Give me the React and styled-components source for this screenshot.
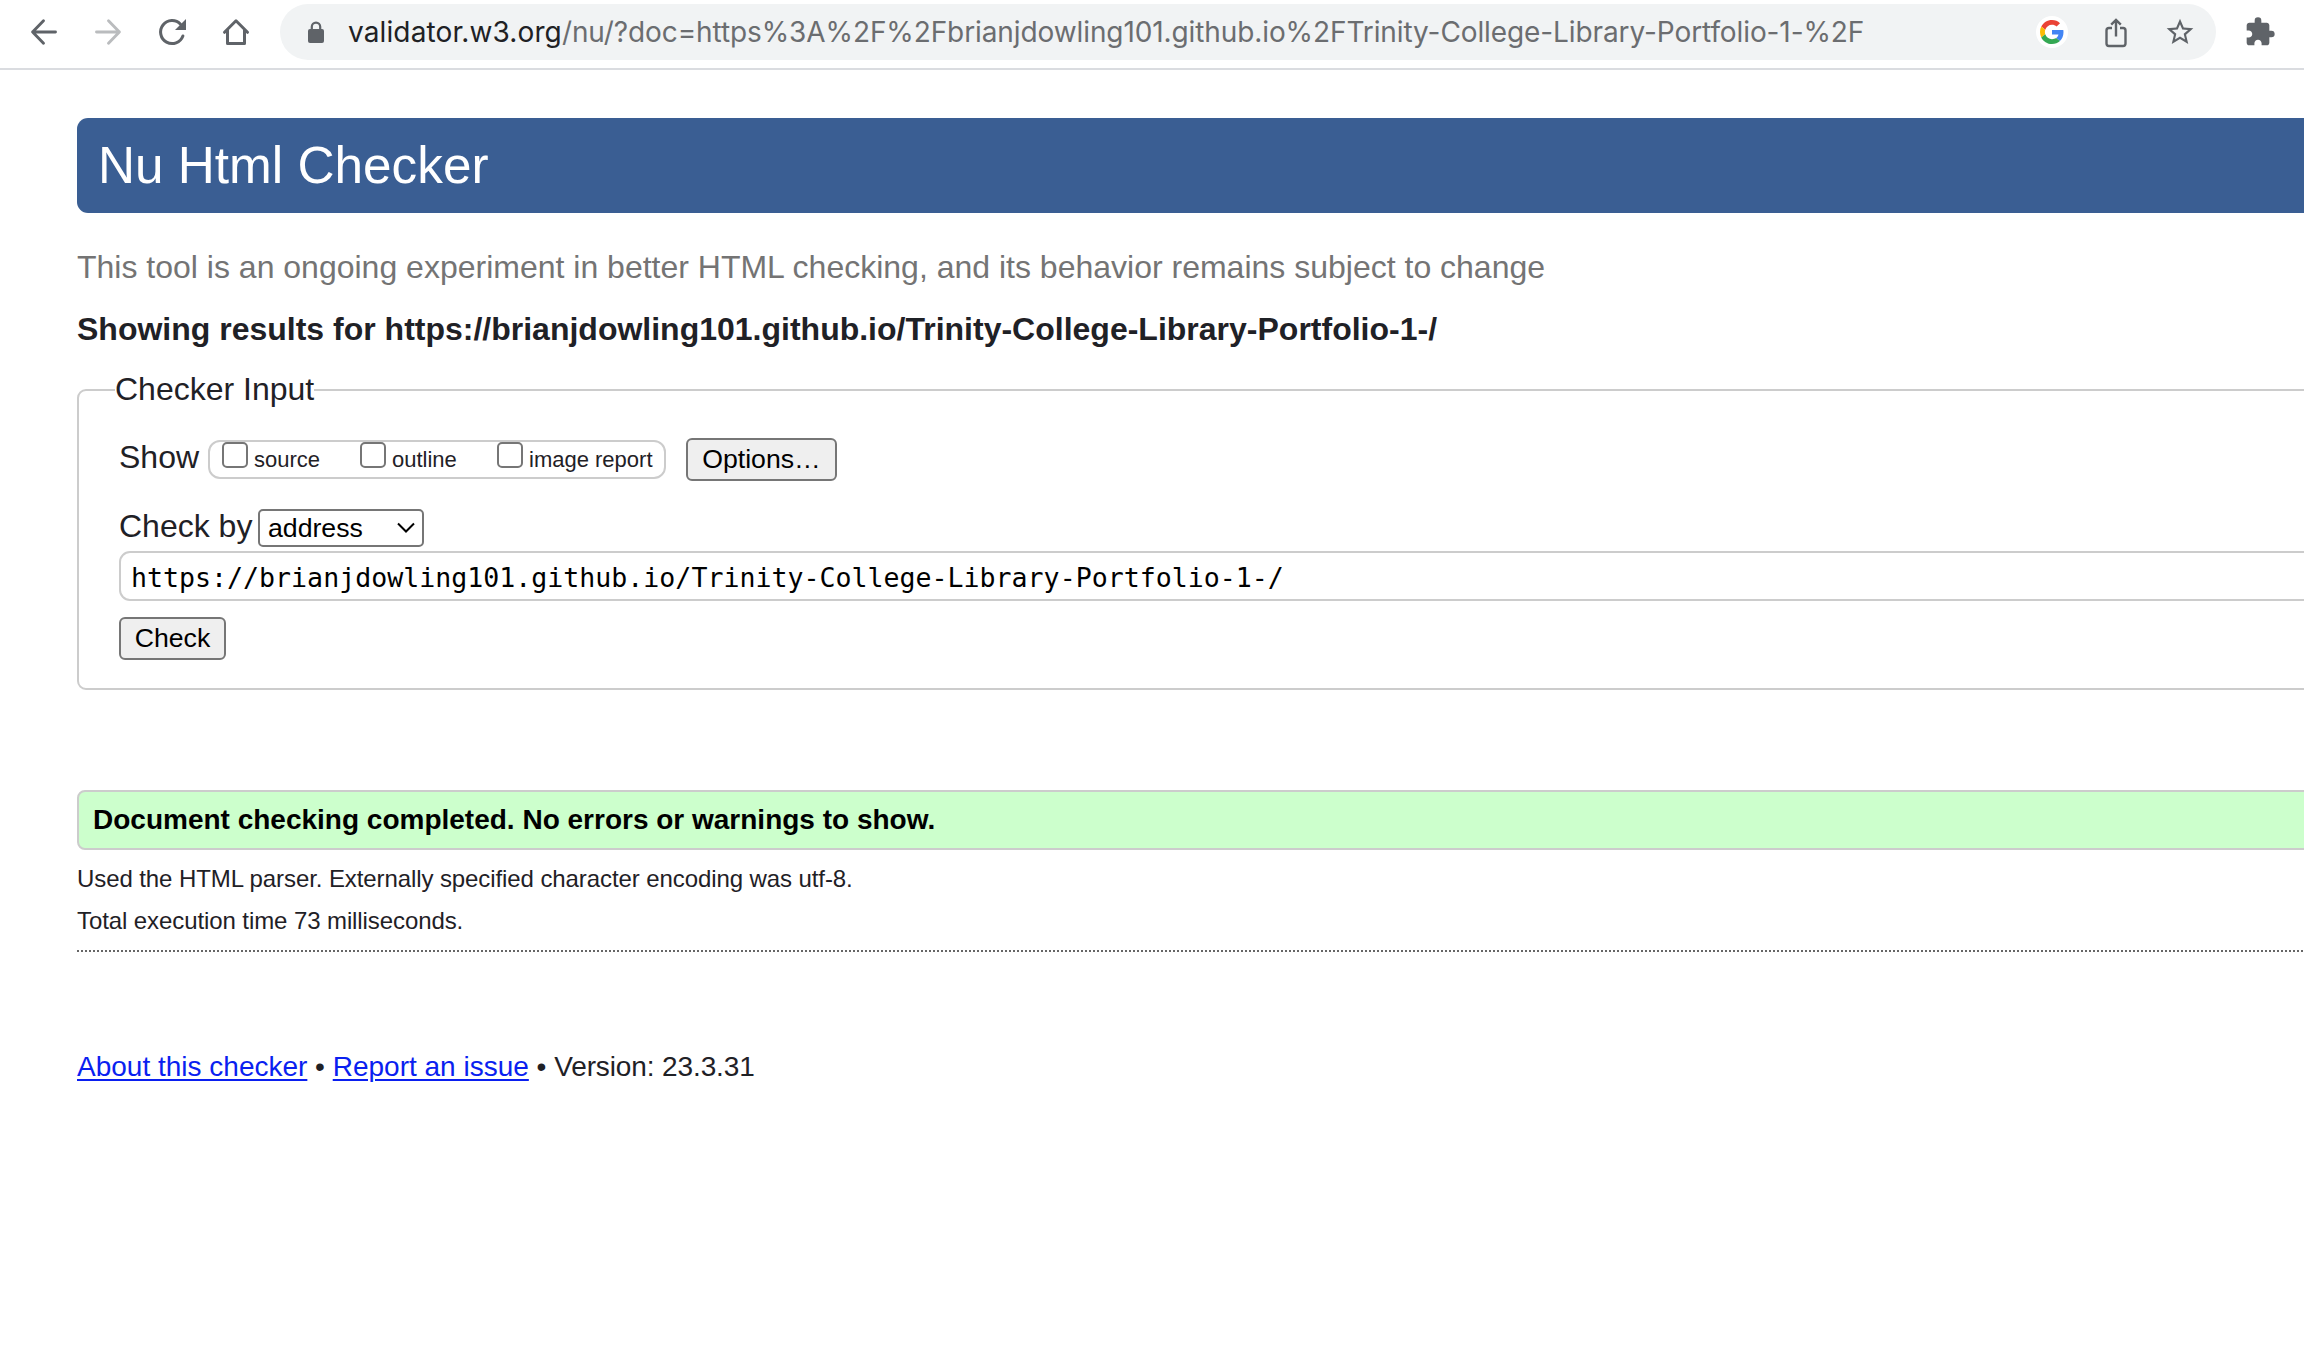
import React from "react";
import styled, { createGlobalStyle } from "styled-components";

const sans = `"Liberation Sans", Arial, sans-serif`;
const ui = `Inter, Roboto, sans-serif`;
const mono = `"DejaVu Sans Mono", monospace`;

const GlobalStyle = createGlobalStyle`
  *, *::before, *::after { box-sizing: border-box; }
  body { margin: 0; background: #fff; color: #1f2126; font-family: ${sans}; overflow: hidden; }
`;

const Screen = styled.div`
  width: 100vw;
  height: 100vh;
  overflow: hidden;
  background: #fff;
`;

const Toolbar = styled.header`
  display: flex;
  align-items: flex-start;
  height: 70px;
  padding: 4px 0 0 24px;
  border-bottom: 2px solid #dadce0;
`;

const NavButton = styled.span`
  display: flex;
  align-items: center;
  justify-content: center;
  flex: none;
  width: 40px;
  height: 56px;
  margin-right: 24px;
  color: ${(p) => (p.$muted ? "#babcbe" : "#5f6368")};
`;

const Omnibox = styled.div`
  display: flex;
  align-items: center;
  flex: none;
  width: 1936px;
  height: 56px;
  padding: 0 20px 0 24px;
  border-radius: 28px;
  background: #f1f3f4;
`;

const LockSlot = styled.span`
  display: flex;
  width: 24px;
  margin-right: 20px;
`;

const Url = styled.span`
  flex: 1;
  white-space: nowrap;
  font: 400 28px/56px ${ui};
  letter-spacing: -0.1px;
  color: #6b6d70;
`;

const Host = styled.span`
  letter-spacing: 0.12px;
  color: #202124;
`;

const OmniAction = styled.span`
  display: flex;
  align-items: center;
  justify-content: center;
  flex: none;
  width: 32px;
  height: 32px;
  margin-left: 32px;
  border-radius: 50%;
  background: ${(p) => (p.$disc ? "#fff" : "transparent")};
  color: #5f6368;
`;

const Extensions = styled.span`
  display: flex;
  align-items: center;
  height: 56px;
  margin-left: 28px;
  color: #5f6368;
`;

const Page = styled.main`
  padding: 48px 0 0 77px;
`;

const TitleBar = styled.h1`
  margin: 0;
  height: 95px;
  padding-left: 21px;
  border-radius: 11px 0 0 11px;
  background: #3a5e93;
  color: #fff;
  font-weight: 400;
  font-size: 51.3px;
  line-height: 95px;
`;

const Tagline = styled.p`
  margin: 34px 0 0;
  color: #747474;
  font-size: 32px;
  line-height: 40px;
`;

const ResultsHeading = styled.h2`
  margin: 22px 0 0;
  font-size: 32px;
  line-height: 40px;
`;

const Fieldset = styled.fieldset`
  margin: 23px -20px 0 0;
  padding: 30px 0 28px 40px;
  border: 2px solid #ccc;
  border-radius: 9px;
  min-width: 0;
`;

const Legend = styled.legend`
  margin-left: -4px;
  padding: 0 0 2px;
  font-size: 32px;
  line-height: 34px;
`;

const Row = styled.div`
  display: flex;
  align-items: flex-start;
  margin-top: ${(p) => p.$gap || 0}px;
`;

const RowLabel = styled.span`
  flex: none;
  width: ${(p) => p.$width}px;
  font-size: 32px;
  line-height: ${(p) => p.$line}px;
  white-space: nowrap;
`;

const CheckGroup = styled.div`
  display: flex;
  align-items: flex-start;
  width: 458px;
  height: 39px;
  margin: 2px 20px 0 0;
  padding-left: 12px;
  border: 2px solid #ccc;
  border-radius: 12px;
`;

const CheckItem = styled.label`
  display: flex;
  flex: none;
  width: ${(p) => p.$width}px;
  font-size: 22px;
  line-height: 36px;
  white-space: nowrap;
`;

const Box = styled.span`
  flex: none;
  width: 26px;
  height: 26px;
  margin-right: 6px;
  border: 2px solid #767676;
  border-radius: 5px;
  background: #fff;
`;

const Button = styled.button`
  width: ${(p) => p.$width}px;
  height: 43px;
  padding: 0;
  border: 2px solid #767676;
  border-radius: 6px;
  background: #efefef;
  color: #000;
  font: 26.67px/39px ${sans};
`;

const Select = styled.div`
  display: flex;
  align-items: center;
  justify-content: space-between;
  width: 166px;
  height: 38px;
  padding: 0 6px 0 8px;
  border: 2px solid #767676;
  border-radius: 5px;
  background: #fff;
  color: #000;
  font-size: 26.67px;
  line-height: 34px;
`;

const AddressField = styled.div`
  height: 50px;
  margin-top: 4px;
  padding: 3px 0 0 10px;
  border: 2px solid #ccc;
  border-radius: 11px;
  color: #000;
  font: 26.6px/43px ${mono};
  white-space: nowrap;
`;

const Success = styled.p`
  margin: 100px -20px 0 0;
  height: 60px;
  padding-left: 14px;
  border: 2px solid #ccc;
  border-radius: 8px;
  background: #cfc;
  color: #000;
  font-weight: 700;
  font-size: 28px;
  line-height: 56px;
`;

const Detail = styled.p`
  margin: ${(p) => p.$gap}px 0 0;
  font-size: 24px;
  line-height: 30px;
  letter-spacing: -0.09px;
`;

const Rule = styled.div`
  height: 2px;
  margin-top: 14px;
  background: repeating-linear-gradient(90deg, #666 0 2px, transparent 2px 4px);
`;

const Footer = styled.footer`
  margin-top: 97px;
  font-size: 28px;
  line-height: 36px;
`;

const Version = styled.span`
  letter-spacing: -0.12px;
`;

const Link = styled.a`
  color: #0a1ff0;
  text-decoration: underline;
  text-decoration-thickness: 2px;
  text-underline-offset: 3px;
`;

const BackIcon = () => (
  <svg width="40" height="40" viewBox="0 0 40 40" fill="none" stroke="currentColor" strokeWidth="2.9" strokeLinecap="round" strokeLinejoin="round">
    <path d="M31.500 20H8.600M19.500 8.800L8.600 20l10.900 11.200" />
  </svg>
);

const ForwardIcon = () => (
  <svg width="40" height="40" viewBox="0 0 40 40" fill="none" stroke="currentColor" strokeWidth="2.9" strokeLinecap="round" strokeLinejoin="round">
    <path d="M8.500 20h22.900M20.500 8.800L31.400 20l-10.900 11.200" />
  </svg>
);

const ReloadIcon = () => (
  <svg width="40" height="40" viewBox="0 0 40 40">
    <path d="M30.900 24A11.500 11.500 0 1 1 28.500 12.200" fill="none" stroke="currentColor" strokeWidth="3" strokeLinecap="round" />
    <path d="M34 7v11H23z" fill="currentColor" />
  </svg>
);

const HomeIcon = () => (
  <svg width="40" height="40" viewBox="0 0 40 40" fill="none" stroke="currentColor" strokeWidth="3" strokeLinecap="round" strokeLinejoin="round">
    <path d="M8.500 20.300L20 8.800l11.500 11.500M11.500 18v13.500h17V18" />
  </svg>
);

const LockIcon = () => (
  <svg width="24" height="28" viewBox="0 0 24 28">
    <rect x="4" y="11" width="16" height="14" rx="2" fill="#5f6368" />
    <path d="M7.800 12V8.800a4.200 4.200 0 0 1 8.400 0V12" fill="none" stroke="#5f6368" strokeWidth="2.200" />
  </svg>
);

const GoogleIcon = () => (
  <svg width="24" height="24" viewBox="0 0 48 48">
    <path fill="#EA4335" d="M24 9.500c3.540 0 6.710 1.220 9.210 3.600l6.850-6.850C35.900 2.380 30.470 0 24 0 14.620 0 6.510 5.380 2.560 13.220l7.980 6.190C12.430 13.720 17.740 9.500 24 9.500z" />
    <path fill="#4285F4" d="M46.980 24.550c0-1.570-.15-3.090-.38-4.550H24v9.020h12.940c-.58 2.960-2.260 5.480-4.780 7.180l7.730 6c4.510-4.180 7.090-10.360 7.090-17.650z" />
    <path fill="#FBBC05" d="M10.530 28.590c-.48-1.450-.76-2.990-.76-4.590s.27-3.140.76-4.590l-7.980-6.190C.92 16.460 0 20.120 0 24c0 3.880.92 7.540 2.560 10.780l7.970-6.190z" />
    <path fill="#34A853" d="M24 48c6.480 0 11.930-2.130 15.890-5.810l-7.730-6c-2.150 1.450-4.920 2.300-8.160 2.300-6.260 0-11.570-4.220-13.470-9.910l-7.980 6.190C6.510 42.620 14.620 48 24 48z" />
  </svg>
);

const ShareIcon = () => (
  <svg width="32" height="32" viewBox="0 0 32 32" fill="none" stroke="currentColor" strokeWidth="2.400">
    <path d="M12 12H9a2.500 2.500 0 0 0-2.500 2.500v13A2.500 2.500 0 0 0 9 30h14a2.500 2.500 0 0 0 2.500-2.500v-13A2.500 2.500 0 0 0 23 12h-3M16 20.500V4M11.200 8.600L16 3.900l4.800 4.700" />
  </svg>
);

const StarIcon = () => (
  <svg width="36" height="36" viewBox="0 0 24 24" fill="currentColor">
    <path d="M22 9.240l-7.190-.62L12 2 9.190 8.630 2 9.240l5.460 4.730L5.820 21 12 17.270 18.180 21l-1.630-7.030L22 9.240zM12 15.400l-3.760 2.270 1-4.280-3.320-2.880 4.380-.38L12 6.100l1.710 4.040 4.380.38-3.320 2.880 1 4.280L12 15.400z" />
  </svg>
);

const PuzzleIcon = () => (
  <svg width="32" height="32" viewBox="0 0 24 24" fill="currentColor">
    <path d="M20.500 11H19V7c0-1.100-.9-2-2-2h-4V3.500a2.500 2.500 0 0 0-5 0V5H4c-1.100 0-1.990.9-1.990 2v3.800H3.500c1.490 0 2.700 1.210 2.700 2.700s-1.210 2.700-2.700 2.700H2V20c0 1.100.9 2 2 2h3.800v-1.500c0-1.490 1.210-2.700 2.700-2.700s2.700 1.210 2.700 2.700V22H17c1.100 0 2-.9 2-2v-4h1.500a2.500 2.500 0 0 0 0-5z" />
  </svg>
);

const ChevronIcon = () => (
  <svg width="20" height="12" viewBox="0 0 20 12" fill="none" stroke="#000" strokeWidth="2">
    <path d="M2 1.500l8 8 8-8" />
  </svg>
);

export default function App() {
  return (
    <Screen>
      <GlobalStyle />
      <Toolbar>
        <NavButton><BackIcon /></NavButton>
        <NavButton $muted><ForwardIcon /></NavButton>
        <NavButton><ReloadIcon /></NavButton>
        <NavButton><HomeIcon /></NavButton>
        <Omnibox>
          <LockSlot><LockIcon /></LockSlot>
          <Url>
            <Host>validator.w3.org</Host>
            /nu/?doc=https%3A%2F%2Fbrianjdowling101.github.io%2FTrinity-College-Library-Portfolio-1-%2F
          </Url>
          <OmniAction $disc><GoogleIcon /></OmniAction>
          <OmniAction><ShareIcon /></OmniAction>
          <OmniAction><StarIcon /></OmniAction>
        </Omnibox>
        <Extensions><PuzzleIcon /></Extensions>
      </Toolbar>
      <Page>
        <TitleBar>Nu Html Checker</TitleBar>
        <Tagline>This tool is an ongoing experiment in better HTML checking, and its behavior remains subject to change</Tagline>
        <ResultsHeading>Showing results for https://brianjdowling101.github.io/Trinity-College-Library-Portfolio-1-/</ResultsHeading>
        <Fieldset>
          <Legend>Checker Input</Legend>
          <Row>
            <RowLabel $width={89} $line={38}>Show</RowLabel>
            <CheckGroup>
              <CheckItem $width={138}><Box />source</CheckItem>
              <CheckItem $width={137}><Box />outline</CheckItem>
              <CheckItem $width={160}><Box />image report</CheckItem>
            </CheckGroup>
            <Button $width={151}>Options…</Button>
          </Row>
          <Row $gap={28}>
            <RowLabel $width={139} $line={34}>Check by</RowLabel>
            <Select>address<ChevronIcon /></Select>
          </Row>
          <AddressField>https://brianjdowling101.github.io/Trinity-College-Library-Portfolio-1-/</AddressField>
          <Row $gap={16}>
            <Button $width={107}>Check</Button>
          </Row>
        </Fieldset>
        <Success>Document checking completed. No errors or warnings to show.</Success>
        <Detail $gap={14}>Used the HTML parser. Externally specified character encoding was utf-8.</Detail>
        <Detail $gap={12}>Total execution time 73 milliseconds.</Detail>
        <Rule />
        <Footer>
          <Link>About this checker</Link> • <Link>Report an issue</Link> • <Version>Version: 23.3.31</Version>
        </Footer>
      </Page>
    </Screen>
  );
}
